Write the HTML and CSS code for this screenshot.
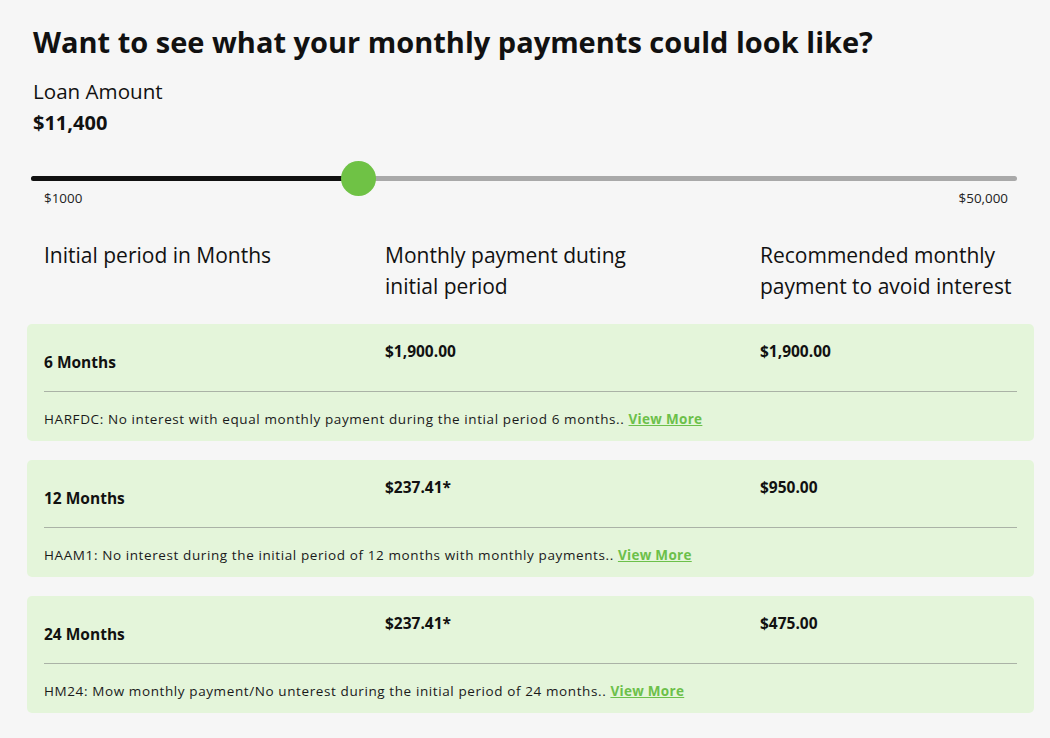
FILE: index.html
```html
<!DOCTYPE html>
<html>
	<head>
		<meta charset="utf-8">
		<title>Monthly payments</title>
		<link rel="stylesheet" href="styles.css">
	</head>
	<body>
		<div class="page">
			<div class="intro">
				<h1 class="title">Want to see what your monthly payments could look like?</h1>
				<div class="loan-label">Loan Amount</div>
				<div class="loan-value">$11,400</div>

				<!-- slider -->
				<div class="slider">
					<div class="track">
						<div class="fill" style="width: 327px;"></div>
						<div class="thumb" style="left: 327px;"></div>
					</div>
				</div>
				<div class="range-labels">
					<span>$1000</span>
					<span>$50,000</span>
				</div>
			</div>

			<div class="grid head">
				<div>Initial period in Months</div>
				<div>Monthly payment duting<br>initial period</div>
				<div>Recommended monthly<br>payment to avoid interest</div>
			</div>

			<div class="plan">
				<div class="grid">
					<div class="period">6 Months</div>
					<div class="amount">$1,900.00</div>
					<div class="amount">$1,900.00</div>
				</div>
				<p class="desc">HARFDC: No interest with equal monthly payment during the intial period 6 months.. <a href="#">View More</a></p>
			</div>

			<div class="plan">
				<div class="grid">
					<div class="period">12 Months</div>
					<div class="amount">$237.41*</div>
					<div class="amount">$950.00</div>
				</div>
				<p class="desc">HAAM1: No interest during the initial period of 12 months with monthly payments.. <a href="#">View More</a></p>
			</div>

			<div class="plan">
				<div class="grid">
					<div class="period">24 Months</div>
					<div class="amount">$237.41*</div>
					<div class="amount">$475.00</div>
				</div>
				<p class="desc">HM24: Mow monthly payment/No unterest during the initial period of 24 months.. <a href="#">View More</a></p>
			</div>
		</div>
	</body>
</html>
```

FILE: styles.css
```css
body {
	margin: 0;
	background-color: #f6f6f6;
	color: #111;
	font-family: "Open Sans", "Noto Sans", sans-serif;
}

.page {
	padding: 23px 16px 20px 27px;
}

/* top part */
.intro {
	padding-left: 4px;
}

.title,
.loan-label,
.loan-value {
	padding-left: 2px;
}

.title {
	margin: 0;
	font-size: 29px;
	font-weight: 700;
	line-height: 38px;
}

.loan-label {
	margin-top: 17px;
	font-size: 20.6px;
	line-height: 27px;
}

.loan-value {
	margin-top: 5px;
	font-size: 20px;
	font-weight: 700;
	line-height: 26px;
}

/* slider */
.slider {
	display: flex;
	align-items: center;
	height: 36px;
	margin-top: 24px;
	width: 986px;
}

.track {
	position: relative;
	flex: 1;
	height: 5px;
	border-radius: 3px;
	background-color: #a9a9a9;
}

.fill {
	height: 5px;
	border-radius: 3px;
	background-color: #111;
}

.thumb {
	position: absolute;
	top: 50%;
	width: 35px;
	height: 35px;
	margin: -17.5px 0 0 -17.5px;
	border-radius: 50%;
	background-color: #6fc245;
}

.range-labels {
	display: flex;
	justify-content: space-between;
	width: 986px;
	margin-top: -6px;
	padding: 0 9px 0 13px;
	box-sizing: border-box;
	font-size: 13.4px;
	line-height: 17px;
	color: #222;
}

/* columns */
.grid {
	display: grid;
	grid-template-columns: 341px 375px 1fr;
}

.head {
	margin: 33px 0 22px;
	padding: 0 17px;
	font-size: 21px;
	line-height: 31px;
}

/* plan cards */
.plan {
	margin-bottom: 19px;
	padding: 17px 17px 13px;
	border-radius: 5px;
	background-color: #e4f5da;
}

.plan .grid {
	padding-bottom: 19px;
	border-bottom: 1px solid #aab2a6;
	font-size: 15.5px;
	font-weight: 700;
	line-height: 20px;
}

.plan .period {
	padding-top: 11px;
}

.desc {
	margin: 18px 0 0;
	font-size: 13.5px;
	line-height: 18px;
	letter-spacing: 0.6px;
	color: #1a1a1a;
}

.desc a {
	color: #6cc04a;
	font-weight: 700;
	letter-spacing: 0.3px;
}
```
